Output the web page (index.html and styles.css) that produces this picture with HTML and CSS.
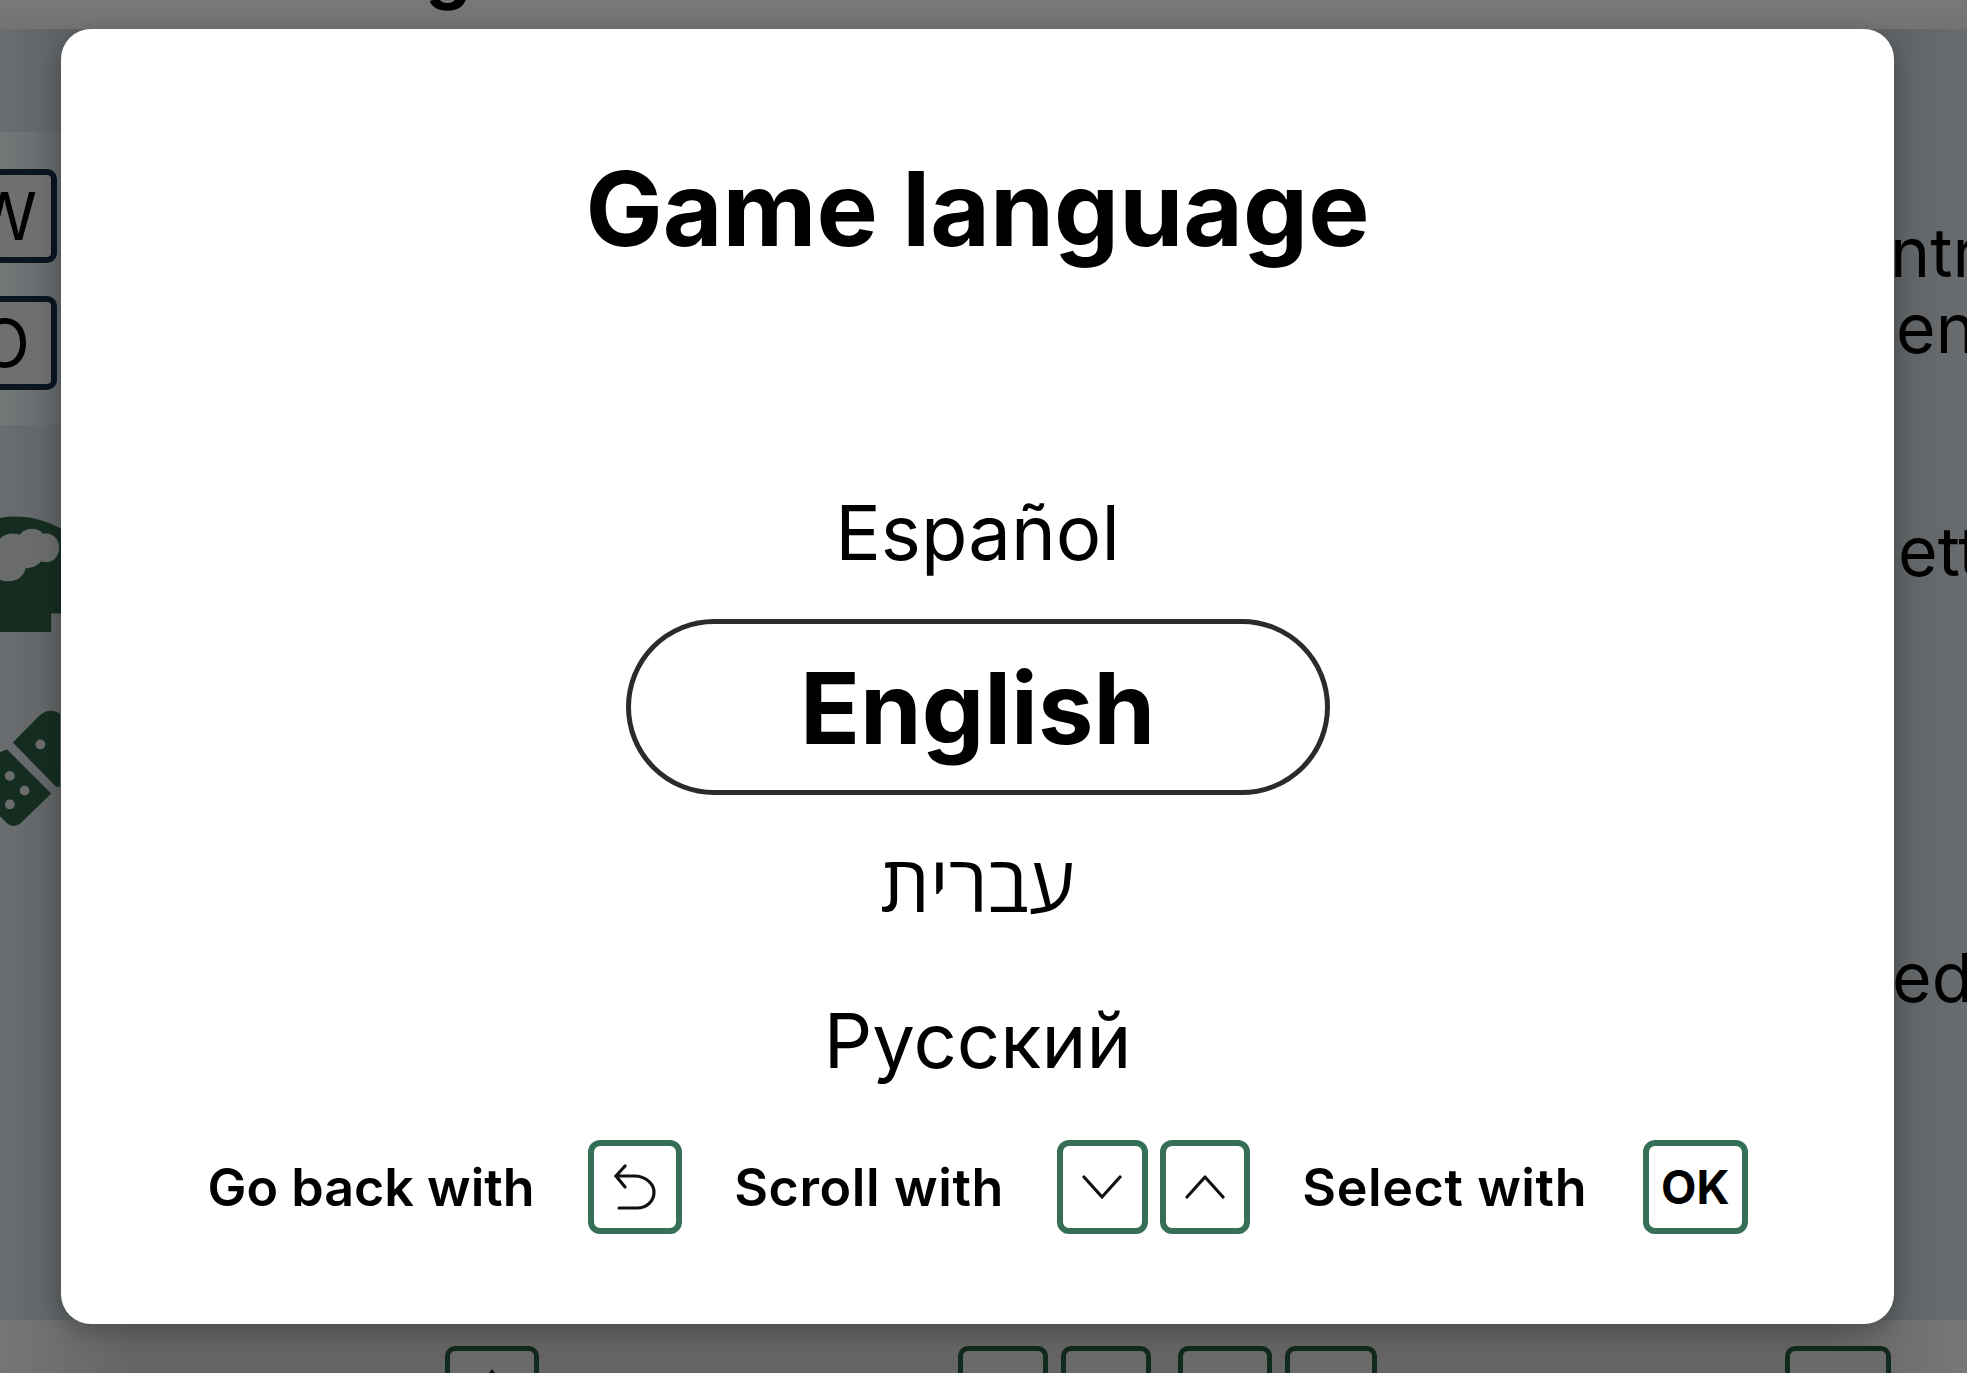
FILE: index.html
```html
<!DOCTYPE html>
<html lang="en">
<head>
    <meta charset="UTF-8">
    <title>Game language</title>
    <link rel="stylesheet" href="styles.css">
</head>
<body>

    <div class="page">
        <div class="page-top"><span class="page-title">Settings</span></div>

        <div class="page-middle">
            <div class="side-left">
                <div class="key-panel">
                    <div class="back-key key-w">W</div>
                    <div class="back-key key-o">O</div>
                </div>
                <svg class="side-icon-head" viewBox="0 0 62 120">
                    <path fill="#152d20" d="M0 1 C22 -3 44 2 62 12 V98 H52 V117 H0 Z"/>
                    <path fill="#6a6b6c" d="M0 22 C6 16 14 16 20 18 C26 10 38 10 44 17 C54 15 62 24 60 34 C58 44 50 48 42 45 C36 52 28 52 26 52 C24 62 14 68 0 64 Z"/>
                </svg>
                <svg class="side-icon-domino" viewBox="0 0 62 120">
                    <path fill="#152d20" d="M13 33 L40 6 C46 0 54 -1 61 4 V78 L57 78 Z"/>
                    <path fill="#152d20" d="M0 43 L7 40 L52 85 L22 114 C17 119 11 119 6 114 L0 108 Z"/>
                    <circle cx="41" cy="35" r="5" fill="#6a6b6c"/>
                    <circle cx="10" cy="67" r="5" fill="#6a6b6c"/>
                    <circle cx="25" cy="82" r="5" fill="#6a6b6c"/>
                    <circle cx="10" cy="96" r="5" fill="#6a6b6c"/>
                </svg>
            </div>
            <div class="side-right">
                <div class="side-word one">ntr</div>
                <div class="side-word two">en</div>
                <div class="side-word three">ett</div>
                <div class="side-word four">ed</div>
            </div>
        </div>

        <div class="page-bottom">
            <div class="back-hint bh-one"><span class="back-arrow"></span></div>
            <div class="back-hint bh-two"></div>
            <div class="back-hint bh-three"></div>
            <div class="back-hint bh-four"></div>
            <div class="back-hint bh-five"></div>
            <div class="back-hint bh-six"></div>
        </div>
    </div>

    <div class="modal">
        <h1 class="modal-title">Game language</h1>

        <ul class="language-list">
            <li class="language">Español</li>
            <li class="language selected">English</li>
            <li class="language hebrew">עברית</li>
            <li class="language">Русский</li>
        </ul>

        <div class="hints">
            <span class="hint-label">Go back with</span>
            <span class="key key-back">
                <svg viewBox="0 0 42 46" width="42" height="46" fill="none" stroke="#111" stroke-width="3.2" stroke-linecap="round" stroke-linejoin="round">
                    <path d="M11 2 L2 12 L11 23"/>
                    <path d="M2 12 H20 C33 12 40 21 40 28 C40 37 33 44 23 44 H5"/>
                </svg>
            </span>
            <span class="hint-label scroll-label">Scroll with</span>
            <span class="key">
                <svg viewBox="0 0 40 26" width="40" height="26" fill="none" stroke="#111" stroke-width="3.2" stroke-linecap="round" stroke-linejoin="round">
                    <path d="M2 3 L20 23 L38 3"/>
                </svg>
            </span>
            <span class="key key-up">
                <svg viewBox="0 0 40 26" width="40" height="26" fill="none" stroke="#111" stroke-width="3.2" stroke-linecap="round" stroke-linejoin="round">
                    <path d="M2 23 L20 3 L38 23"/>
                </svg>
            </span>
            <span class="hint-label select-label">Select with</span>
            <span class="key key-ok">OK</span>
        </div>
    </div>

</body>
</html>
```

FILE: styles.css
```css
* {
  box-sizing: border-box;
}

html, body {
  margin: 0;
  height: 100%;
  overflow: hidden;
}

body {
  font-family: "Inter", "Open Sans", sans-serif;
  color: #000;
  background: #68696b;
}

/* page behind the dialog, already dimmed */
.page {
  height: 1373px;
  display: flex;
  flex-direction: column;
  background: #65696c;
}

.page-top {
  height: 29px;
  overflow: hidden;
  background: linear-gradient(#787878, #737373);
  padding-left: 221px;
}

.page-title {
  display: block;
  font-size: 72px;
  font-weight: 700;
  line-height: 72px;
  margin-top: -67px;
}

.page-middle {
  flex: 1;
  display: flex;
  justify-content: space-between;
  background: linear-gradient(90deg, #6b6e70, #5f6365 61px);
}

.side-left {
  width: 61px;
  padding-top: 103px;
  overflow: hidden;
}

.key-panel {
  height: 293px;
  padding-top: 37px;
  background: linear-gradient(90deg, #737879, #636769);
}

.back-key {
  width: 57px;
  height: 94px;
  margin-bottom: 33px;
  border: 6px solid #0a1522;
  border-left: 0;
  border-radius: 0 10px 10px 0;
  background: #6f6f6f;
  font-size: 66px;
  line-height: 82px;
  display: flex;
  justify-content: flex-end;
  white-space: nowrap;
  overflow: hidden;
}

.key-w { padding-right: 14px; }
.key-o { padding-right: 21px; }

.side-icon-head {
  display: block;
  width: 61px;
  height: 120px;
  margin-top: 91px;
}

.side-icon-domino {
  display: block;
  width: 61px;
  height: 120px;
  margin-top: 73px;
}

.side-right {
  width: 73px;
  padding-top: 191px;
  overflow: hidden;
  background: linear-gradient(90deg, #5f6365, #6a6d70);
}

.side-word {
  font-size: 68px;
  line-height: 64px;
  white-space: nowrap;
}

.side-word.one { margin-left: -4px; }
.side-word.two { margin-top: 12px; padding-left: 2px; }
.side-word.three { margin-top: 159px; padding-left: 4px; }
.side-word.four { margin-top: 362px; margin-left: -2px; }

.page-bottom {
  height: 53px;
  overflow: hidden;
  display: flex;
  padding-top: 26px;
  background: linear-gradient(90deg, #767676, #656565 130px, #656565 1830px, #787878);
}

.back-hint {
  height: 60px;
  border: 5px solid #112a1c;
  border-radius: 10px;
  background: #6a6a6a;
  display: flex;
  justify-content: center;
}

.back-arrow {
  width: 0;
  height: 0;
  margin-top: 18px;
  border-left: 6px solid transparent;
  border-right: 6px solid transparent;
  border-bottom: 8px solid #111;
}

.bh-one { width: 94px; margin-left: 445px; }
.bh-two { width: 90px; margin-left: 419px; }
.bh-three { width: 90px; margin-left: 13px; }
.bh-four { width: 94px; margin-left: 27px; }
.bh-five { width: 92px; margin-left: 13px; }
.bh-six { width: 106px; margin-left: 408px; }

/* the dialog */
.modal {
  position: absolute;
  top: 29px;
  left: 61px;
  width: 1833px;
  height: 1295px;
  display: flex;
  flex-direction: column;
  align-items: center;
  background: #fff;
  border-radius: 30px;
  box-shadow: 0 8px 24px rgba(0, 0, 0, 0.25);
}

.modal-title {
  margin: 125px 0 0;
  font-size: 103px;
  font-weight: 700;
  line-height: 110px;
  white-space: nowrap;
}

.language-list {
  list-style: none;
  margin: 218px 0 0;
  padding: 0;
  width: 704px;
  text-align: center;
}

.language {
  font-size: 76px;
  line-height: 100px;
  height: 156px;
}

.language:first-child {
  height: 137px;
}

.language:last-child {
  height: 100px;
}

.language.hebrew {
  font-size: 78px;
}

.language.selected {
  height: 176px;
  border: 5px solid #2b2a2c;
  border-radius: 88px;
  font-size: 99px;
  font-weight: 700;
  line-height: 169px;
  margin-bottom: 39px;
}

.hints {
  margin-top: auto;
  margin-bottom: 90px;
  display: flex;
  align-items: center;
  width: 1540px;
}

.hint-label {
  font-size: 52px;
  font-weight: 600;
  white-space: nowrap;
}

.key {
  width: 92px;
  height: 94px;
  display: flex;
  align-items: center;
  justify-content: center;
  border: 6px solid #366f56;
  border-radius: 12px;
  margin-left: 53px;
}

.key-back { width: 96px; }
.key-up { margin-left: 12px; }
.key-ok { width: 106px; margin-left: 56px; font-size: 46px; font-weight: 700; }
.scroll-label, .select-label { margin-left: 52px; letter-spacing: 0.6px; }
```
